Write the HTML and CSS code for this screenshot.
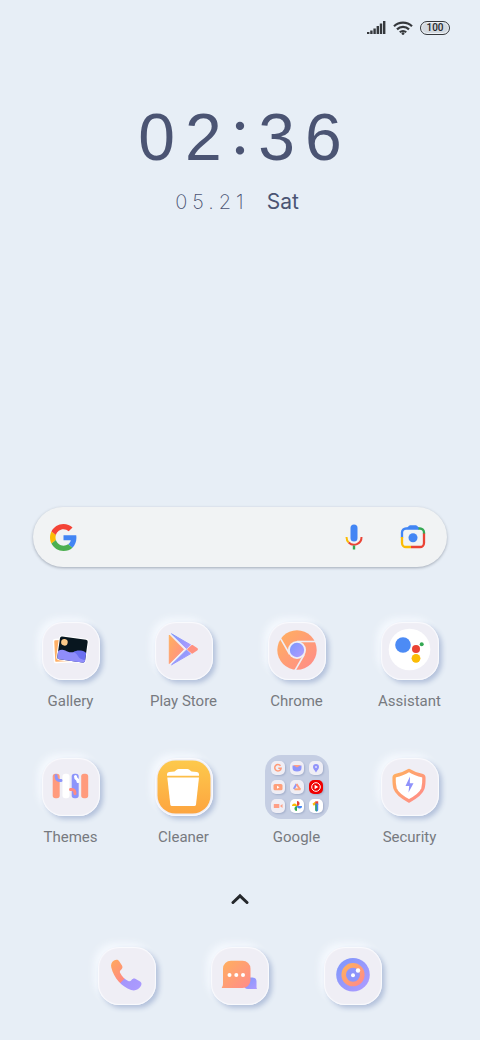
FILE: index.html
```html
<!DOCTYPE html>
<html lang="en">
<head>
  <meta charset="UTF-8">
  <meta name="viewport" content="width=device-width, initial-scale=1.0">
  <title>Home Screen</title>
  <link rel="stylesheet" href="styles.css">
</head>
<body>
  <!-- shared gradients -->
  <svg class="defs" aria-hidden="true">
    <defs>
      <linearGradient id="peach" x1="0" y1="0" x2="1" y2="1">
        <stop offset="0" stop-color="#ffb05e"/>
        <stop offset="1" stop-color="#ff8b8b"/>
      </linearGradient>
      <linearGradient id="violet" x1="0" y1="0" x2="1" y2="1">
        <stop offset="0" stop-color="#7c97fb"/>
        <stop offset="1" stop-color="#b19bff"/>
      </linearGradient>
      <linearGradient id="amber" x1="0" y1="0" x2="0" y2="1">
        <stop offset="0" stop-color="#fdc94c"/>
        <stop offset="1" stop-color="#fda540"/>
      </linearGradient>
      <linearGradient id="call" x1="0" y1="0" x2="1" y2="1">
        <stop offset="0" stop-color="#ffaa5c"/>
        <stop offset="0.52" stop-color="#ff8a80"/>
        <stop offset="0.54" stop-color="#a496fb"/>
        <stop offset="1" stop-color="#ad9cff"/>
      </linearGradient>
    </defs>
  </svg>

  <header class="status">
    <svg width="19" height="14" viewBox="0 0 19 14" fill="#35383c">
      <rect x="0" y="11" width="2.4" height="2"/>
      <rect x="3.2" y="9.5" width="2.4" height="3.5"/>
      <rect x="6.4" y="7.5" width="2.4" height="5.5"/>
      <rect x="9.6" y="5" width="2.4" height="8"/>
      <rect x="12.8" y="2.5" width="2.4" height="10.5"/>
      <rect x="16" y="0" width="2.4" height="13"/>
    </svg>
    <svg width="20" height="14" viewBox="0 0 20 14" fill="none" stroke="#35383c" stroke-width="2.2">
      <path d="M1 5.2a13 13 0 0 1 18 0"/>
      <path d="M4 8.4a8.6 8.6 0 0 1 12 0"/>
      <path d="M6.8 11.2a4.8 4.8 0 0 1 6.4 0"/>
      <circle cx="10" cy="12.6" r="1.4" fill="#35383c" stroke="none"/>
    </svg>
    <span class="battery">100</span>
  </header>

  <main>
    <section class="clock">
      <div class="time">02<span class="colon">:</span>36</div>
      <div class="date"><span class="day">05.21</span><span class="weekday">Sat</span></div>
    </section>

    <form class="search">
      <svg width="27" height="27" viewBox="0 0 48 48">
        <path fill="#4285f4" d="M46.98 24.55c0-1.57-.15-3.09-.38-4.55H24v9.02h12.94c-.58 2.96-2.26 5.48-4.78 7.18l7.73 6c4.51-4.18 7.09-10.36 7.09-17.65z"/>
        <path fill="#fbbc05" d="M10.53 28.59c-.48-1.45-.76-2.99-.76-4.59s.27-3.14.76-4.59l-7.98-6.19C.92 16.46 0 20.12 0 24s.92 7.54 2.56 10.78l7.97-6.19z"/>
        <path fill="#f44336" d="M24 9.5c3.54 0 6.71 1.22 9.21 3.6l6.85-6.85C35.9 2.38 30.47 0 24 0 14.62 0 6.51 5.38 2.56 13.22l7.98 6.19C12.43 13.72 17.74 9.5 24 9.5z"/>
        <path fill="#4caf50" d="M24 48c6.48 0 11.93-2.13 15.89-5.81l-7.73-6c-2.15 1.45-4.92 2.3-8.16 2.3-6.26 0-11.57-4.22-13.47-9.91l-7.98 6.19C6.51 42.62 14.62 48 24 48z"/>
      </svg>
      <input class="query" type="text" aria-label="Search">
      <button class="tool" type="button" aria-label="Voice search">
        <svg width="26" height="26" viewBox="0 0 26 26" fill="none" stroke-width="2">
          <rect x="9.5" y="0.5" width="7" height="17" rx="3.5" fill="#4285f4"/>
          <path d="M5.5 13c0 2.4.8 4.2 2.2 5.5" stroke="#fbbc04"/>
          <path d="M20.5 13a7.5 7.5 0 0 1-12.8 5.5" stroke="#ea4335"/>
          <path d="M13 21.5v4" stroke="#34a853" stroke-width="2.4"/>
        </svg>
      </button>
      <button class="tool" type="button" aria-label="Search with camera">
        <svg width="26" height="26" viewBox="0 0 26 26" fill="none" stroke-width="2.3">
          <path d="M6.5 4.5L9 1.8q.5-.6 1.2-.6h5.6q.7 0 1.2.6l2.5 2.7z" fill="#4285f4"/>
          <path d="M2 14V8.5a4 4 0 0 1 4-4h13" stroke="#4285f4"/>
          <path d="M18.5 4.5H20a4 4 0 0 1 4 4V10" stroke="#34a853"/>
          <path d="M24 9.5V19a4 4 0 0 1-4 4h-9" stroke="#ea4335"/>
          <path d="M2 13v6a4 4 0 0 0 4 4h5" stroke="#fbbc04"/>
          <circle cx="13" cy="13.7" r="4.5" fill="#4285f4"/>
        </svg>
      </button>
    </form>

    <nav class="apps">
      <a class="app" href="#">
        <span class="tile">
          <svg viewBox="0 0 58 58">
            <rect x="12" y="17" width="24" height="23" rx="2" fill="#ffb066" stroke="#fff" stroke-width="1.5" transform="rotate(-3 25 29)"/>
            <g transform="rotate(8 30.5 27.5)">
              <rect x="15.5" y="15" width="30" height="25" rx="3" fill="#fff"/>
              <rect x="16.5" y="16" width="28" height="23" rx="2" fill="#08161f"/>
              <path d="M29 35c1-5 5-7.5 9.5-7.5 2.5 0 4.500.5 6 1.500v8a2 2 0 0 1-2 2H29z" fill="#6a6ff0"/>
              <path d="M16.5 31c2-1.800 4.500-2.200 7-1.500 2.500.8 4 1.500 7 .8 3-.6 5 1 6.500 3 1.500 2 3.500 2.500 7.500 3.200v.5a2 2 0 0 1-2 2h-24a2 2 0 0 1-2-2z" fill="#8f8dfb"/>
              <circle cx="21.5" cy="21.5" r="3.3" fill="#fbc98a"/>
            </g>
          </svg>
        </span>
        <span class="name">Gallery</span>
      </a>
      <a class="app" href="#">
        <span class="tile">
          <svg viewBox="0 0 58 58" stroke-linejoin="round">
            <path d="M14.3 13v28.5L28.5 27.3z" fill="url(#peach)" stroke="url(#peach)"/>
            <path d="M16.5 11.8l19 11-4 3.7z" fill="url(#violet)" stroke="url(#violet)"/>
            <path d="M16.5 42.8l19-11-4-3.7z" fill="url(#violet)" stroke="url(#violet)"/>
            <path d="M33 27.3l4.2-3.6 4.5 3q.8.6 0 1.2l-4.5 3z" fill="#ff9180" stroke="#ff9180" stroke-width="1.6"/>
          </svg>
        </span>
        <span class="name">Play Store</span>
      </a>
      <a class="app" href="#">
        <span class="tile">
          <svg viewBox="0 0 58 58">
            <circle cx="29" cy="28" r="19.7" fill="url(#peach)"/>
            <circle cx="29" cy="28" r="9" fill="#efeef5"/>
            <g fill="none" stroke="#efeef5" stroke-width="1.6">
              <path d="M29 19.5h19"/>
              <path d="M29 19.5h19" transform="rotate(120 29 28)"/>
              <path d="M29 19.5h19" transform="rotate(240 29 28)"/>
            </g>
            <circle cx="29" cy="28" r="7.2" fill="url(#violet)"/>
          </svg>
        </span>
        <span class="name">Chrome</span>
      </a>
      <a class="app" href="#">
        <span class="tile">
          <svg viewBox="0 0 58 58">
            <circle cx="28.5" cy="27.5" r="20.8" fill="#fff"/>
            <circle cx="22" cy="23" r="7.8" fill="#4c8bf5"/>
            <circle cx="35" cy="27" r="4" fill="#ea4335"/>
            <circle cx="40.7" cy="22.3" r="2" fill="#34a853"/>
            <circle cx="35" cy="36.3" r="4.4" fill="#fbbc05"/>
          </svg>
        </span>
        <span class="name">Assistant</span>
      </a>
      <a class="app" href="#">
        <span class="tile">
          <svg viewBox="0 0 58 58" fill="none" stroke-linecap="round">
            <rect x="10.7" y="15.7" width="7" height="24.6" rx="2.8" fill="#ff9b7d"/>
            <rect x="20.5" y="15.7" width="7" height="24.6" rx="2.8" fill="#fff"/>
            <rect x="29.7" y="15.7" width="7" height="24.6" rx="2.8" fill="#8d95fb"/>
            <rect x="39.2" y="15.7" width="7" height="24.6" rx="2.8" fill="#ff9b7d"/>
            <path d="M14 17.5c0 4 2 5.500 5 5" stroke="#8d95fb" stroke-width="3"/>
            <path d="M33.5 18.5c0 3.500 2.500 1.500 2.500 5" stroke="#fff" stroke-width="3"/>
            <path d="M28.5 31.5c3-.5 4.500 1 4.500 4" stroke="#ff8b80" stroke-width="3"/>
          </svg>
        </span>
        <span class="name">Themes</span>
      </a>
      <a class="app" href="#">
        <span class="tile">
          <svg viewBox="0 0 58 58" fill="#fff">
            <rect x="2.5" y="2.5" width="53" height="53" rx="18" fill="url(#amber)"/>
            <path d="M12 17.7v-1.5q0-2 2-2.2l5.5-.5 2.5-2q.6-.5 1.5-.5h9q.9 0 1.5.5l2.5 2 5.5.5q2 .2 2 2.2v1.5z"/>
            <path d="M12.3 19.5h31.7l-3 27q-.2 1.5-1.7 1.500H17q-1.500 0-1.700-1.500z"/>
          </svg>
        </span>
        <span class="name">Cleaner</span>
      </a>
      <a class="app" href="#">
        <span class="folder">
          <span class="mini">
            <svg viewBox="0 0 14 14"><path d="M9.5 4.8A3.2 3.2 0 1 0 10.1 7.3H7.3" fill="none" stroke="#ff9a78" stroke-width="1.5"/></svg>
          </span>
          <span class="mini">
            <svg viewBox="0 0 14 14"><path d="M2.500 4.500h9v2.500a4.500 3.500 0 0 1-9 0z" fill="#8d95fb"/><path d="M3 4l4 2.6L11 4z" fill="#ff9f86"/></svg>
          </span>
          <span class="mini">
            <svg viewBox="0 0 14 14"><path d="M7 11.5C5.5 9 4 8 4 6a3 3 0 0 1 6 0c0 2-1.5 3-3 5.5z" fill="#9193fa"/><circle cx="7" cy="6" r="1.1" fill="#dcdcfb"/></svg>
          </span>
          <span class="mini">
            <svg viewBox="0 0 14 14"><rect x="2.5" y="4" width="9" height="6.3" rx="1.5" fill="#ff9f7a"/><path d="M6 5.7l2.5 1.5L6 8.7z" fill="#fff"/></svg>
          </span>
          <span class="mini">
            <svg viewBox="0 0 14 14" fill="none" stroke-width="1.9"><path d="M6.5 4L3.8 9" stroke="#8d95fb"/><path d="M6.5 4l3.6 5.5" stroke="#ff9a80"/><path d="M4.5 9.3h6" stroke="#ffa577"/></svg>
          </span>
          <span class="mini red">
            <svg viewBox="0 0 14 14"><circle cx="7" cy="7" r="4.3" fill="none" stroke="#fff"/><path d="M5.6 4.8L9.3 7 5.6 9.2z" fill="#fff"/></svg>
          </span>
          <span class="mini">
            <svg viewBox="0 0 14 14" fill="#ff9f86"><rect x="2.8" y="5" width="5.5" height="4" rx="0.5"/><path d="M9 7l2.5-2v4z"/></svg>
          </span>
          <span class="mini white">
            <svg viewBox="0 0 14 14"><path d="M7 7V2a2.5 2.5 0 0 1 0 5z" fill="#ea4335"/><path d="M7 7h5a2.5 2.5 0 0 1-5 0z" fill="#4285f4"/><path d="M7 7v5a2.5 2.5 0 0 1 0-5z" fill="#34a853"/><path d="M7 7H2a2.5 2.5 0 0 1 5 0z" fill="#fbbc04"/></svg>
          </span>
          <span class="mini white">
            <svg viewBox="0 0 14 14"><path d="M6.3 2.5L3.5 4.8l1.2 2 2.6-1.5z" fill="#fbbc04"/><path d="M6.3 2.3h2.9V6H6.3z" fill="#ea4335"/><path d="M6.3 4.5h2.9V11a1.45 1.45 0 0 1-2.9 0z" fill="#4285f4"/><path d="M6.3 5.5h1.4v7a1.5 1.5 0 0 1-1.4-1.5z" fill="#34a853"/></svg>
          </span>
        </span>
        <span class="name">Google</span>
      </a>
      <a class="app" href="#">
        <span class="tile">
          <svg viewBox="0 0 58 58" stroke-linejoin="round">
            <path d="M28 12.3q7 4.200 13 5.200 1.800.3 1.900 2 .2 7-1 11-2 6-13.900 12.500-11.900-6.500-13.900-12.500-1.200-4-1-11 .1-1.700 1.900-2 6-1 13-5.200z" fill="#fff" stroke="url(#peach)" stroke-width="3.3"/>
            <path d="M29 18.5l-4.5 9.5h3.7l-.7 6.5 5-9.3h-3.7z" fill="#8f92fb"/>
          </svg>
        </span>
        <span class="name">Security</span>
      </a>
    </nav>

    <button class="drawer" type="button" aria-label="Open app drawer">
      <svg width="18" height="12" viewBox="0 0 18 12" fill="none" stroke="#25272b" stroke-width="3">
        <path d="M2 9.5L9 2.8l7 6.7" stroke-linecap="round"/>
      </svg>
    </button>
  </main>

  <footer class="dock">
    <a class="tile" href="#" aria-label="Phone">
      <svg viewBox="0 0 58 58">
        <path d="M16 13.500c1.800-1.200 4-1.200 5 .4l3 4.700c.9 1.600.5 3-.9 4.200-1.300 1.100-1.500 2-.9 3.300 1.800 3.700 4.500 6.200 8 7.800 1.500.7 2.500.2 3.300-.9 1.100-1.500 2.600-1.900 4.200-1.100l4.400 2.600c1.700 1 1.800 2.900.6 4.800-2.200 3.400-5.500 5-9.600 3.700C23.600 39.500 16 31.500 13.300 20.600c-.7-3 .2-5.600 2.700-7.100z" fill="url(#call)"/>
      </svg>
    </a>
    <a class="tile" href="#" aria-label="Messages">
      <svg viewBox="0 0 58 58">
        <path d="M37 30.5h4.5a4 4 0 0 1 4 4V40q0 1 .5 2H37a4 4 0 0 1-4-4z" fill="url(#violet)"/>
        <path d="M20 13.7h11.500a8 8 0 0 1 8 8V33a8 8 0 0 1-8 8H11.300c-.6 0-.6-.5-.2-1 .7-1 .9-2 .9-4V21.700a8 8 0 0 1 8-8z" fill="url(#peach)"/>
        <g fill="#fff"><circle cx="18.5" cy="28" r="2"/><circle cx="25.3" cy="28" r="2"/><circle cx="32" cy="28" r="2"/></g>
      </svg>
    </a>
    <a class="tile" href="#" aria-label="Camera">
      <svg viewBox="0 0 58 58">
        <circle cx="29" cy="27.7" r="16.8" fill="url(#violet)"/>
        <circle cx="29" cy="27.7" r="9.3" fill="#8d95fb" stroke="url(#peach)" stroke-width="4.6"/>
        <circle cx="29" cy="28.3" r="2" fill="#fff"/>
        <circle cx="34" cy="23.5" r="2.2" fill="#fff"/>
      </svg>
    </a>
  </footer>
</body>
</html>
```

FILE: styles.css
```css
* {
  margin: 0;
  padding: 0;
  box-sizing: border-box;
}
body {
  min-height: 100vh;
  background: #e7eef6;
  color: #4b5473;
  font-family: Roboto, sans-serif;
}
svg {
  display: block;
}
a {
  color: inherit;
  text-decoration: none;
}
button,
input {
  border: none;
  background: none;
  font: inherit;
}
button {
  cursor: pointer;
}
.defs {
  position: absolute;
  width: 0;
  height: 0;
}

/* Status bar */
.status {
  display: flex;
  justify-content: flex-end;
  align-items: center;
  gap: 7px;
  height: 56px;
  padding: 0 30px;
}
.battery {
  width: 30px;
  height: 14px;
  border: 1px solid #35383c;
  border-radius: 7px;
  background: #d3d9e0;
  box-shadow: inset 0 0 0 1px #eef2f7;
  color: #25272b;
  font-size: 10px;
  font-weight: 500;
  line-height: 12px;
  text-align: center;
}

/* Clock */
.clock {
  padding-top: 48px;
  text-align: center;
}
.time {
  padding-left: 10px;
  font-family: "Liberation Sans", sans-serif;
  font-size: 66px;
  line-height: 66px;
  letter-spacing: 10px;
}
.colon {
  font-family: Lato, sans-serif;
  line-height: 0;
  vertical-align: 6px;
}
.date {
  display: flex;
  justify-content: center;
  align-items: baseline;
  gap: 18px;
  margin-top: 20px;
  padding-right: 6px;
  font-family: Inter, sans-serif;
  font-size: 20px;
  line-height: 24px;
}
.day {
  font-weight: 200;
  letter-spacing: 5px;
}
.weekday {
  font-size: 21px;
  font-weight: 400;
}

/* Search */
.search {
  display: flex;
  align-items: center;
  height: 60px;
  margin: 293px 33px 0;
  padding: 0 21px 0 17px;
  border-radius: 30px;
  background: #f1f3f4;
  box-shadow: 0 1px 3px rgba(60, 70, 90, 0.4);
}
.query {
  flex: 1;
  min-width: 0;
  height: 40px;
  margin: 0 12px;
  outline: none;
}
.tool {
  margin-left: 33px;
}
.query + .tool {
  margin-left: 0;
}

/* Apps */
.apps {
  display: grid;
  grid-template-columns: repeat(4, 1fr);
  row-gap: 47px;
  margin-top: 55px;
  padding: 0 14px;
}
.app {
  display: flex;
  flex-direction: column;
  align-items: center;
  gap: 11px;
}
.name {
  color: #777a80;
  font-size: 15px;
  line-height: 20px;
}
.tile {
  width: 58px;
  height: 58px;
  border-radius: 21px;
  background: #efeef5;
  box-shadow: inset 0 0 1px 1px #fafbfe, 3px 3px 5px #b3c1db, -4px -4px 7px #f5f9fe;
}
.folder {
  display: grid;
  grid-template-columns: repeat(3, 14px);
  place-content: center;
  gap: 5px;
  width: 64px;
  height: 64px;
  margin: -3px;
  border-radius: 16px;
  background: #c5cee3;
}
.mini {
  height: 14px;
  border-radius: 5px;
  background: #efeef5;
  box-shadow: 1px 1px 2px #a3afcb;
}
.mini.white {
  background: #fff;
}
.mini.red {
  background: #f00000;
}

.drawer {
  display: block;
  margin: 46px auto 0;
  padding: 0 8px;
}

/* Dock */
.dock {
  display: flex;
  justify-content: center;
  gap: 55px;
  padding: 42px 0 36px;
}
```
